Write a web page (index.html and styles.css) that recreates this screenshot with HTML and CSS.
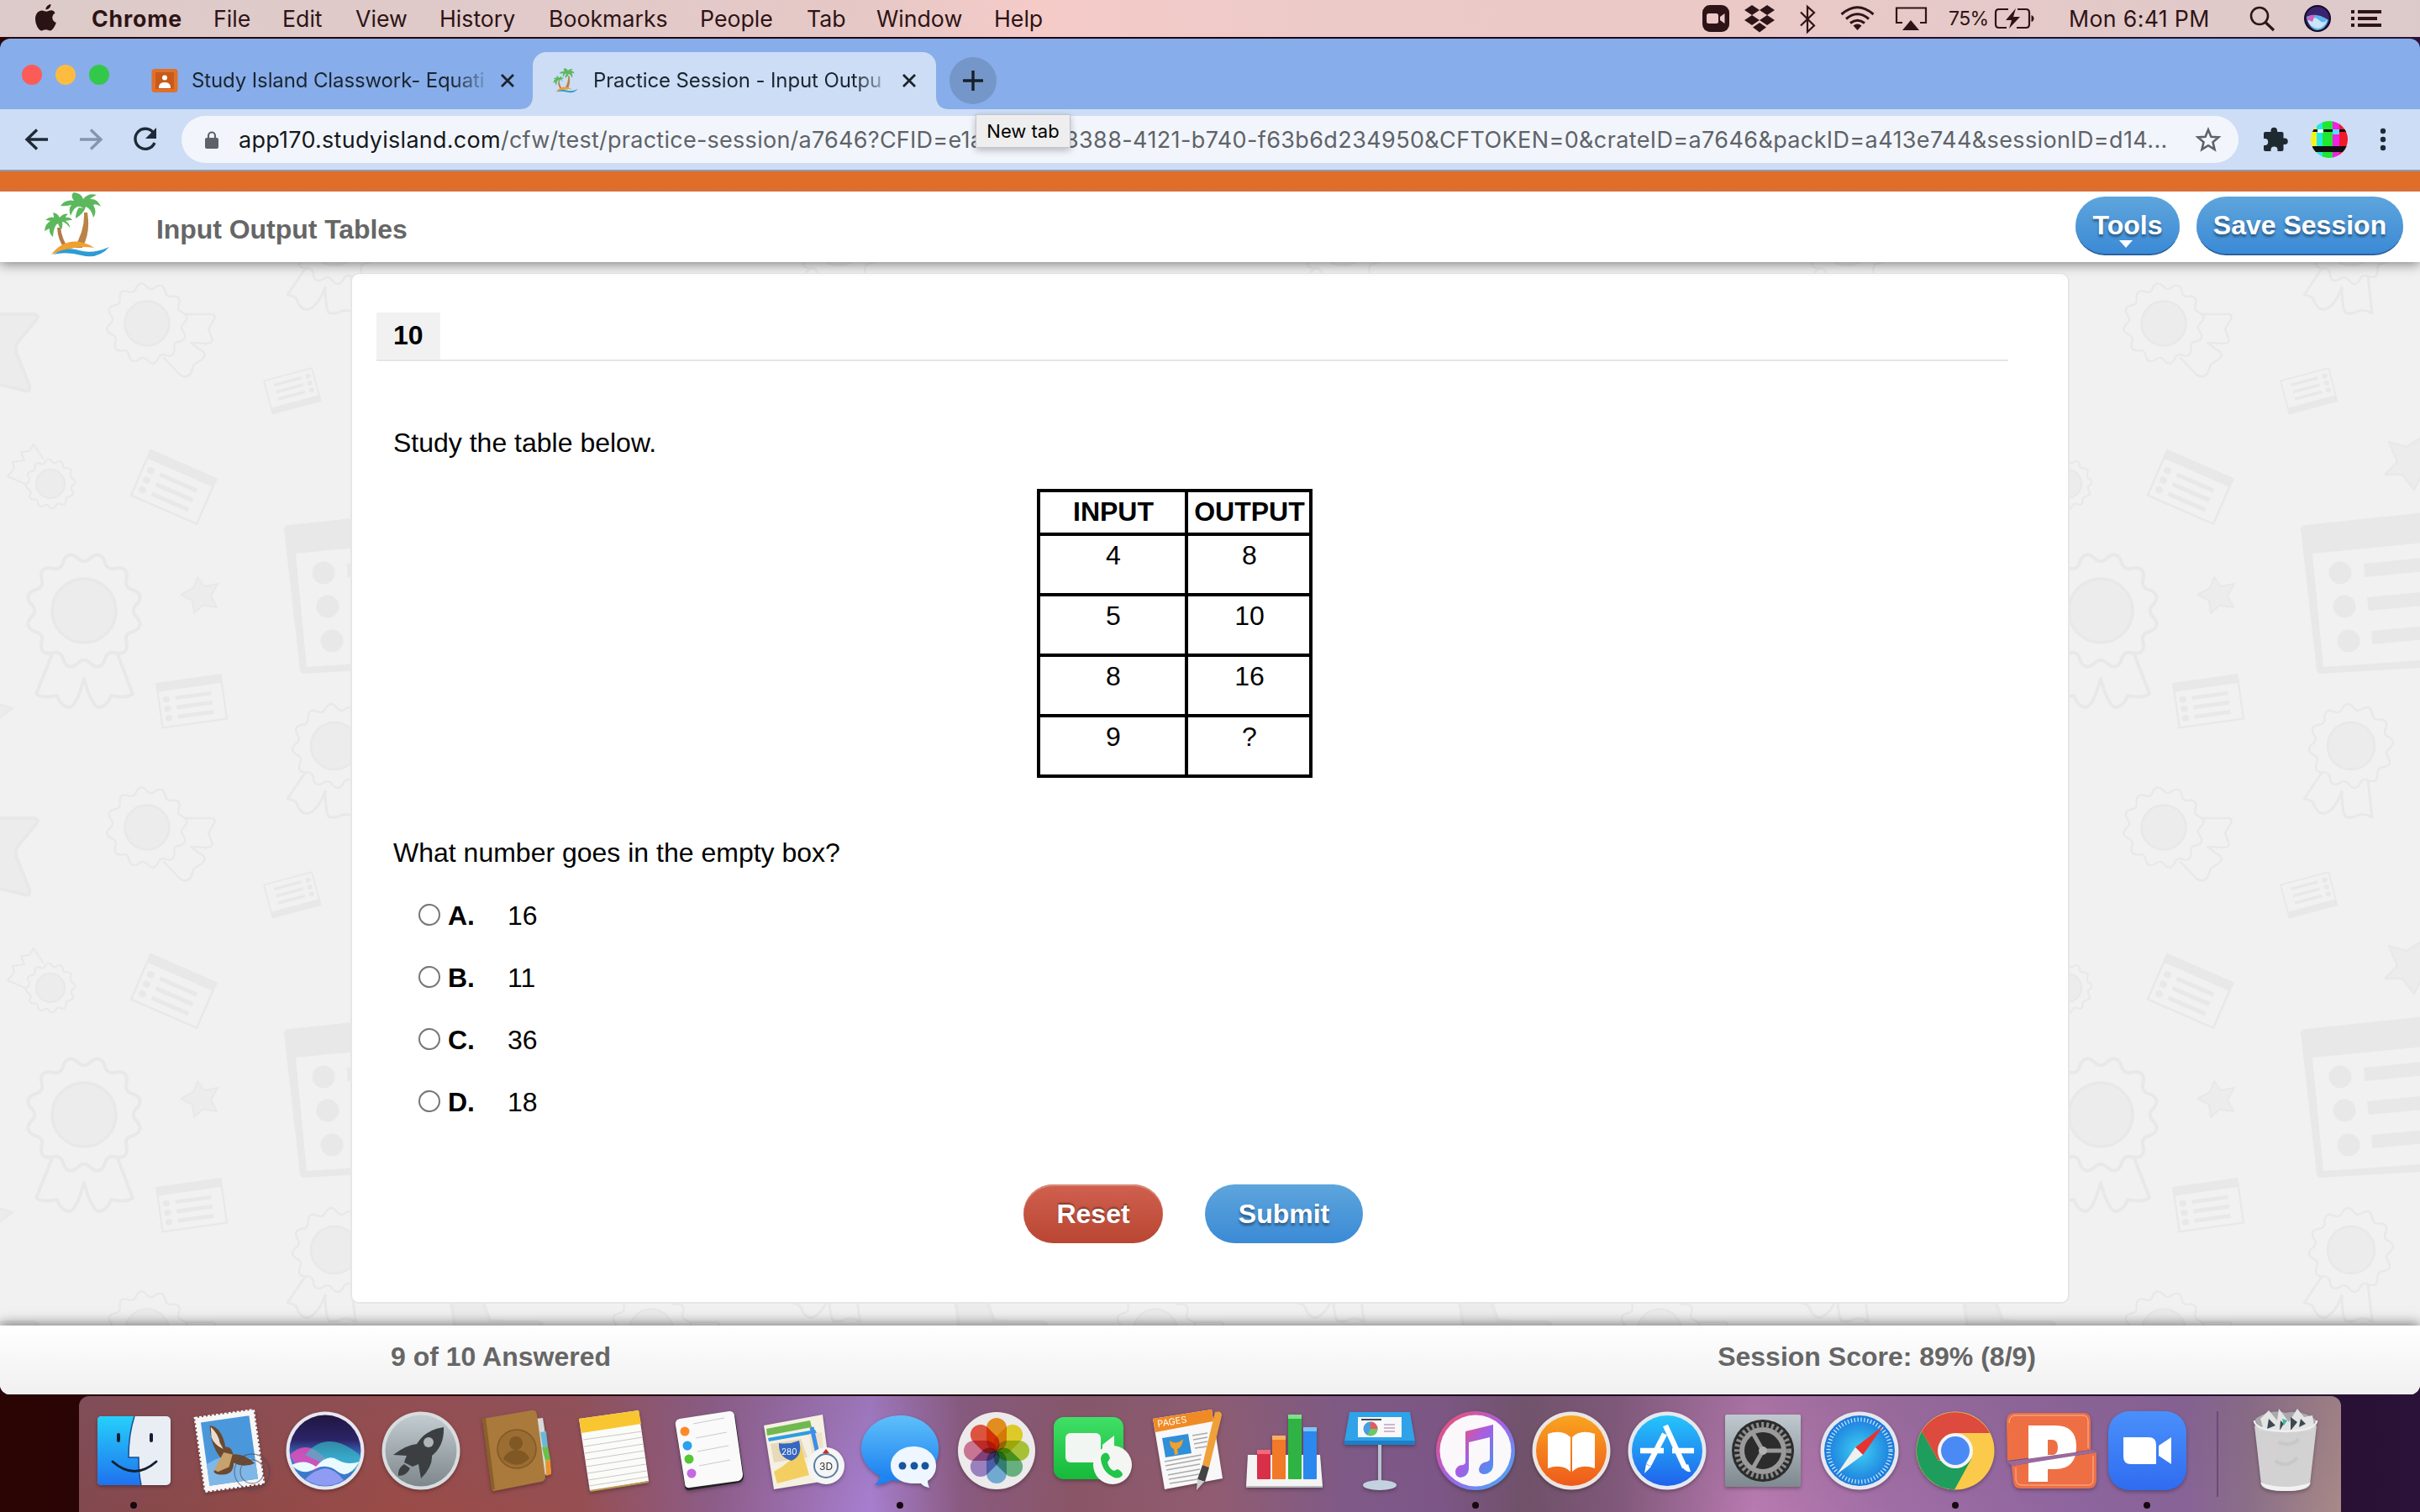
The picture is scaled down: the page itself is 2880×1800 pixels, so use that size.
FILE: index.html
```html
<!DOCTYPE html>
<html lang="en">
<head>
<meta charset="utf-8">
<title>Practice Session - Input Output Tables</title>
<link rel="stylesheet" href="styles.css">
</head>
<body>
<header class="menubar">
  <svg class="apple" viewBox="0 0 28 34"><path fill="#2a1315" d="M19.5 1c.3 3-2.600 6.500-6 6.500C13.100 4.500 16.200 1.300 19.500 1zM24.500 11.500c-4.800 3-3.900 9.500 1.300 11.500-1.500 4.500-4.500 9.500-7.300 9.500-1.900 0-2.700-1.200-5-1.200s-3.200 1.200-5 1.200C5 32.500 1 25 1 18.500 1 12 5 8.500 9 8.500c2.200 0 3.700 1.300 5.200 1.300 1.400 0 3.200-1.500 5.800-1.500 1.700 0 3.600 1.200 4.500 3.200z"/></svg>
  <nav class="menus">
    <b>Chrome</b><span>File</span><span>Edit</span><span>View</span><span>History</span><span>Bookmarks</span><span>People</span><span>Tab</span><span>Window</span><span>Help</span>
  </nav>
  <svg class="status" viewBox="2020 0 300 44">
    <g fill="#2e1416">
      <rect x="2026" y="6" width="32" height="32" rx="9"/><rect x="2031" y="16" width="14" height="12" rx="2.500" fill="#ecc9c8"/><path fill="#ecc9c8" d="M2047 20l5.500-4v12l-5.500-4z"/>
      <path d="M2085 6l9 6-9 6-9-6zM2103 6l9 6-9 6-9-6zM2085 18l9 6-9 6-9-6zM2103 18l9 6-9 6-9-6zM2094 27l8 5.500-8 6-8-6z"/>
      <path d="M2205.500 30.500q5-4 10 0l-5 5.500z"/>
      <path d="M2274 24l10 12h-20z"/>
    </g>
    <g fill="none" stroke="#2e1416" stroke-width="2.200">
      <path d="M2143 14.500l16 16-8 7.500V8l8 7-16 15.500"/>
      <path stroke-width="3" d="M2191.500 17q19-16.500 38 0M2197 22.500q13.500-11.500 27 0M2202 27.500q8.500-6.500 17 0"/>
      <path d="M2264 27h-7V9.500h35V27h-7"/>
    </g>
  </svg>
  <span class="pct">75%</span>
  <svg class="battery" viewBox="0 0 50 30"><g fill="none" stroke="#2e1416" stroke-width="2.200"><path d="M17 4H6q-4 0-4 4v14q0 4 4 4h9M28 4h10q4 0 4 4v14q0 4-4 4H27"/></g><path fill="#2e1416" d="M26 3L14 17h7l-3 10 13-14h-8zM44.500 11q3 1 3 4t-3 4z"/></svg>
  <span class="clock">Mon 6:41 PM</span>
  <svg class="tray" viewBox="2670 0 170 44">
    <circle cx="2689" cy="19" r="10" fill="none" stroke="#2e1416" stroke-width="2.600"/><path d="M2696.500 27l9.500 9" stroke="#2e1416" stroke-width="3.200"/>
    <circle cx="2758" cy="22" r="16" fill="#120a22"/><circle cx="2758" cy="22" r="14" fill="#3a2470"/><path d="M2745 20q12-6 26 4-4 12-13 12t-13-16z" fill="#5fb4e8"/><path d="M2746 24q8-6 14 0t10-2q-2 10-11 12-10-1-13-10z" fill="#c9e6fa"/><path d="M2745 23q4-6 10-5l-3 8z" fill="#d35fc0"/>
    <path fill="#2e1416" d="M2798 12h4v4h-4zM2806 12h28v4h-28zM2798 20h4v4h-4zM2806 20h23v4h-23zM2798 28h4v4h-4zM2806 28h28v4h-28z"/>
  </svg>
</header>

<div class="window">
  <div class="tabs">
    <div class="lights"><i class="red"></i><i class="amber"></i><i class="green"></i></div>
    <div class="tab tab-a">
      <svg class="fav" viewBox="0 0 33 28"><rect x=".5" y="0" width="31" height="28" rx="4" fill="#e0702a"/><rect x="5" y="4" width="22" height="20" fill="#c85a1a"/><circle cx="16" cy="10.500" r="3" fill="#fff"/><path d="M9 21q1-5 7-5t7 5v2H9z" fill="#fff"/></svg>
      <span class="tab-title">Study Island Classwork- Equati</span>
      <svg class="x" viewBox="0 0 20 20"><path d="M3 3l14 14M17 3L3 17" stroke="#1b2229" stroke-width="2.800"/></svg>
    </div>
    <div class="tab tab-b">
      <svg class="corner left" viewBox="0 0 16 16"><path d="M16 0v16H0Q16 16 16 0z" fill="#ccddf5"/></svg>
      <svg class="fav" viewBox="0 0 33 28"><use href="#palm" transform="scale(.38) translate(0,-2)"/></svg>
      <span class="tab-title">Practice Session - Input Outpu</span>
      <svg class="x" viewBox="0 0 20 20"><path d="M3 3l14 14M17 3L3 17" stroke="#1b2229" stroke-width="2.800"/></svg>
      <svg class="corner right" viewBox="0 0 16 16"><path d="M0 0v16h16Q0 16 0 0z" fill="#ccddf5"/></svg>
    </div>
    <div class="newtab"><svg viewBox="0 0 24 24"><path d="M12 0v24M0 12h24" stroke="#16202a" stroke-width="3.400"/></svg></div>
  </div>
  <div class="toolbar">
    <svg class="navs" viewBox="0 0 216 72">
      <g fill="none" stroke="#1f2a36" stroke-width="3.400"><path d="M57 36H33M44 24.500L32 36l12 11.500"/><path stroke="#8496ae" d="M95 36h24M108 24.500L120 36l-12 11.500"/><path d="M182.500 28A12 12 0 1 0 184 40"/></g><path fill="#1f2a36" d="M186 22v13h-13z"/>
    </svg>
    <div class="omnibox">
      <svg class="lock" viewBox="0 0 18 25"><rect x="1" y="10" width="16" height="13" rx="2" fill="#5f6368"/><path d="M5 11V7.500a4 4 0 0 1 8 0V11" fill="none" stroke="#5f6368" stroke-width="2.200"/></svg>
      <span class="url-a"><span class="host">app170.studyisland.com</span>/cfw/test/practice-session/a7646?CFID=e1a</span>
      <span class="url-b">3388-4121-b740-f63b6d234950&amp;CFTOKEN=0&amp;crateID=a7646&amp;packID=a413e744&amp;sessionID=d14...</span>
      <svg class="star" viewBox="0 0 30 28"><path d="M15 2.500l3.400 8.200 8.900.7-6.800 5.800 2.100 8.700L15 21.200l-7.600 4.700 2.100-8.700-6.800-5.800 8.900-.7z" fill="none" stroke="#5f6368" stroke-width="2.600"/></svg>
    </div>
    <svg class="ext" viewBox="2680 0 200 72">
      <path fill="#1f2a30" d="M2696 27h6.500v-1.500a3.800 3.800 0 0 1 7.600 0V27h5.400q2 0 2 2v5.500h1.500a3.800 3.800 0 0 1 0 7.600h-1.500V48q0 2-2 2h-5v-1.500a4 4 0 0 0-8 0V50H2696q-2 0-2-2v-5h1.200a4 4 0 0 0 0-8h-1.200v-6q0-2 2-2z"/>
      <clipPath id="av"><circle cx="2772" cy="36" r="22"/></clipPath>
      <g clip-path="url(#av)"><path fill="#f3f31c" d="M2750 14h8v44h-8z"/><path fill="#25e6e6" d="M2757 14h9v44h-9z"/><path fill="#20e82e" d="M2764 14h13v44h-13z"/><path fill="#f020e8" d="M2776 14h9v44h-9z"/><path fill="#f01a28" d="M2784 14h12v44h-12z"/><path fill="#101010" d="M2750 24h44v3h-44zM2752 44h42v7h-42z"/><path fill="#fff" d="M2758 24h7v4h-7z"/><path fill="#5fd8ff" d="M2776 24h8v6h-8z"/></g>
      <g fill="#1f2a36"><circle cx="2836" cy="26" r="3.200"/><circle cx="2836" cy="36" r="3.200"/><circle cx="2836" cy="46" r="3.200"/></g>
    </svg>
    <div class="tooltip">New tab</div>
  </div>

  <div class="page">
    <div class="orange"></div>
    <div class="apphead">
      <svg class="palm" viewBox="0 0 80 78">
        <g id="palm">
          <path fill="#b98445" d="M48 24q1 22-12 42h10q10-18 6-42z"/><path fill="#b57a4b" d="M16 42q1 16 9 25h5q-8-10-10-25z"/>
          <path fill="#5cb85c" d="M47 19q-9-7-15 9-3-9 1-13-9 2-13 1 6-8 16-6Q31 3 36 0q9 1 11 8 6-8 16-5-6 3-8 5 9-1 13 9-6-4-9-2 5 8 0 15-2-10-9-13-2 8-12 14 0-8 4-13z"/>
          <path fill="#5cb85c" d="M17 37q-5 2-6 16-5-4-4-10-4 2-6 3 1-9 7-12-4-1-6-1 5-5 10-3 0-3-1-6 6 1 8 6 5-6 10-4-3 2-3 4 5-1 8 3-5 0-8 1 5 3 5 8-4-6-9-7 1 6-1 9-3-3-4-7z"/>
          <path fill="#f0a030" d="M9 74q16-20 38-14 8 2 13 6-20-3-33 3-10 1-18 5z"/>
          <path fill="#2f9bd3" d="M11 74q16-10 31-5 16 5 36-4-13 15-33 10-18-5-34-1z"/>
        </g>
      </svg>
      <h1>Input Output Tables</h1>
      <div class="btn blue tools"><span>Tools</span><i class="caret"></i></div>
      <div class="btn blue save"><span>Save Session</span></div>
    </div>
    <main class="stage">
      <svg class="wall" viewBox="0 312 2880 1266">
        <defs>
          <path id="ros" d="M63.500 8.400Q71.500 19.200 59.100 24.500Q46.800 27 50.800 39Q52.300 52.300 39 50.800Q27 46.800 24.500 59.100Q19.200 71.500 8.400 63.500Q0 54-8.400 63.500Q-19.200 71.500-24.500 59.100Q-27 46.800-39 50.800Q-52.300 52.300-50.800 39Q-46.800 27-59.100 24.500Q-71.500 19.200-63.500 8.400Q-54 0-63.500-8.400Q-71.500-19.200-59.100-24.500Q-46.800-27-50.800-39Q-52.300-52.300-39-50.800Q-27-46.800-24.500-59.100Q-19.200-71.500-8.400-63.500Q0-54 8.400-63.500Q19.200-71.500 24.500-59.100Q27-46.800 39-50.800Q52.300-52.300 50.800-39Q46.800-27 59.100-24.500Q71.500-19.200 63.500-8.400Q54 0 63.500 8.400z"/>
          <g id="doc"><rect x="-41" y="-27" width="82" height="56" stroke-width="2.500"/><path stroke="none" fill="#e8e8e8" d="M-42-28h84v11h-84z"/><g stroke-width="5"><path d="M-20-6h46M-20 6h46M-20 18h46"/><path stroke-width="8" stroke-linecap="round" d="M-32-6h1M-32 6h1M-32 18h1"/></g></g>
          <g id="bigrib" stroke-width="4"><path d="M62 779L43 826q8 6 25 2 4 13 15 14 8-2 17-34 9 32 17 34 11-1 15-14 17 4 26-2l-18-47"/></g>
          <g id="ros10"><path stroke-width="3" d="M363 920l-21 31q8 1 11 5 5 15 15 12 12-6 19-26 0 22 4 30 8 3 16-2 8-2 16 3l-5-45"/><use href="#ros" fill="#f1f1f1" transform="translate(398 888) rotate(10) scale(.73)"/><circle cx="398" cy="888" r="28" fill="#ececec" stroke-width="2.500"/></g>
          <pattern id="tile" patternUnits="userSpaceOnUse" x="0" y="300" width="600" height="600" viewBox="0 300 600 600">
            <g fill="none" stroke="#e8e8e8" stroke-width="3.200" stroke-linejoin="round">
              <path d="M217 374h37q4 3-1 9l-5 9 5 13q-1 4-8 4l-18-1 15 11q4 4-2 9l-9 6-4 11q-6 6-13 1l-20-21" stroke-width="2.500"/>
              <use href="#ros" fill="#f1f1f1" transform="translate(175 385) rotate(6) scale(.7)"/><circle cx="175" cy="385" r="26.500" fill="#ececec" stroke-width="2.500"/>
              <use href="#doc" transform="translate(348 466) rotate(165) scale(.72)"/>
              <path d="M-4 374h44q8 1 3 7L20 409q-3 6 0 12l15 38q2 8-6 6L-4 457z" fill="#ececec" stroke-width="4"/>
              <path d="M32 577L9 567l8-9-2-8 14-2-4-10 10-1 5-8 12 18" stroke-width="2.200"/>
              <use href="#ros" fill="#f1f1f1" transform="translate(60 576) rotate(10) scale(.43)" stroke-width="5"/><circle cx="60" cy="576" r="17" fill="#ececec" stroke-width="2.200"/>
              <use href="#doc" transform="translate(207 579) rotate(23.500) scale(1.040)"/>
              <use href="#bigrib"/><use href="#ros" fill="#f1f1f1" transform="translate(100 727)" stroke-width="4"/><circle cx="100" cy="727" r="38" fill="#ececec" stroke-width="3.500"/>
              <path d="M235 687l8 11 16-3-8 15 7 13-17-2-10 9-2-15-14-7 15-8z" fill="#ececec" stroke-width="2"/>
              <use href="#doc" transform="translate(228 834) rotate(-8) scale(.94)"/>
              <path d="M-3 838l18 5-18 14z" fill="#ececec" stroke-width="2"/>
              <path fill="#e8e8e8" stroke="none" fill-rule="evenodd" d="M338 630q0-4 5-5L600 598v190L362 802q-4 0-5-4zM352 659l13 135L600 778V635z"/>
              <g fill="#e8e8e8" stroke="none"><circle cx="385" cy="682" r="13.500"/><circle cx="390" cy="722" r="13.500"/><circle cx="395" cy="763" r="13.500"/><path d="M413 671l180-18v17l-179 17zM417 711l180-17v17l-178 16zM422 751l175-16v16l-174 16z"/></g>
              <use href="#ros10"/><use href="#ros10" transform="translate(0 -600)"/>
              <path d="M443 526l21 6 22-14v22l18 12-20 10-11 21-14-18-21 0 15-15z" fill="#ececec" stroke-width="2.200"/>
              <path d="M604 457l-19-3-32 24-8-44-41-18 39-24-6-44 24-4q8-6 14 6l8 22 21 2z" fill="#ececec" stroke-width="4"/>
            </g>
          </pattern>
        </defs>
        <rect x="0" y="312" width="2880" height="1266" fill="url(#tile)"/>
      </svg>
      <section class="card">
        <div class="qhead"><span class="qnum">10</span></div>
        <p class="q1">Study the table below.</p>
        <table class="io">
          <tr><th>INPUT</th><th>OUTPUT</th></tr>
          <tr><td>4</td><td>8</td></tr>
          <tr><td>5</td><td>10</td></tr>
          <tr><td>8</td><td>16</td></tr>
          <tr><td>9</td><td>?</td></tr>
        </table>
        <p class="q2">What number goes in the empty box?</p>
        <div class="choices">
          <label><i></i><b>A.</b>16</label>
          <label><i></i><b>B.</b>11</label>
          <label><i></i><b>C.</b>36</label>
          <label><i></i><b>D.</b>18</label>
        </div>
        <div class="actions"><div class="btn red reset">Reset</div><div class="btn blue submit">Submit</div></div>
      </section>
    </main>
    <footer class="foot"><span>9 of 10 Answered</span><span>Session Score: 89% (8/9)</span></footer>
  </div>
</div>

<div class="desk">
<div class="dock">
  <div class="app on"><svg viewBox="0 0 100 100"><defs><linearGradient id="gf" x2="0" y2="1"><stop stop-color="#25d0fb"/><stop offset="1" stop-color="#1f72ee"/></linearGradient></defs><rect x="7" y="9" width="87" height="82" rx="5" fill="#e9edf4"/><path d="M51 9H12q-5 0-5 5v72q0 5 5 5h47q-3-14-3-33H44q0-28 7-49z" fill="url(#gf)"/><path d="M51 9q-7 21-7 49h12q0 19 3 33" fill="none" stroke="#1c4d90" stroke-width="1.500"/><path d="M32 31v7M71 31v7" stroke="#142030" stroke-width="4" stroke-linecap="round"/><path d="M25 63q26 23 52 0" fill="none" stroke="#142030" stroke-width="3" stroke-linecap="round"/></svg></div>
  <div class="app"><svg viewBox="0 0 100 100"><g transform="rotate(-8 50 50)"><rect x="15" y="6" width="70" height="88" fill="#f7f7f7" stroke="#f7f7f7" stroke-width="3" stroke-dasharray="3 2"/><rect x="21" y="12" width="58" height="76" fill="#4b97dc"/><path d="M21 62q30-14 58 4v22H21z" fill="#7fb8e8"/><path d="M31 17q14 4 15 28 7 0 8 10 12 0 24 14-14 4-25-4-2 14-15 12-8 0-10-5l14-10Q28 44 31 17z" fill="#6b4a30"/><path d="M32 19q8 10 8 20l3 8q-10-6-12-16z" fill="#e8ddd0"/><path d="M43 51l10 4-6 14-14 4-4-3z" fill="#c8a26c"/></g><g fill="none" stroke="#4b4a60" stroke-width="1.300" opacity=".6"><circle cx="77" cy="75" r="21"/><circle cx="77" cy="75" r="14"/></g></svg></div>
  <div class="app"><svg viewBox="0 0 100 100"><defs><linearGradient id="gs" x2="0" y2="1"><stop stop-color="#201640"/><stop offset=".35" stop-color="#2c2468"/><stop offset=".6" stop-color="#3d7ad0"/><stop offset="1" stop-color="#3a78c8"/></linearGradient></defs><circle cx="50" cy="50" r="46.500" fill="#e9e6ef"/><circle cx="50" cy="50" r="42.500" fill="url(#gs)"/><path d="M8 55q20-20 42 4-10 24-34 10z" fill="#e24fb8" opacity=".85"/><path d="M26 55q26-32 65 0 2 10-8 20-20-2-57-20z" fill="#35c8c8" opacity=".6"/><path d="M10 67q16-8 29 2 14-16 26-8 12 7 26 2-14 22-26 12-12-10-26-4-16 10-29-4z" fill="#e9fbff"/><path d="M26 84q12-12 24-13 12 1 22 14-22 14-46-1z" fill="#8f9cf4"/></svg></div>
  <div class="app"><svg viewBox="0 0 100 100"><defs><linearGradient id="gl" x2="0" y2="1"><stop stop-color="#c3ccd0"/><stop offset="1" stop-color="#7d878c"/></linearGradient></defs><circle cx="50" cy="50" r="46.500" fill="#d9dcde"/><circle cx="50" cy="50" r="42.500" fill="url(#gl)"/><path d="M77 22q-22 3-32 20-12 1-28 13l16 1q-2 4-3 8 4 2 10 5l7-3 3 17q14-14 13-27Q78 44 77 22z" fill="#3b3f42"/><circle cx="59" cy="40" r="6" fill="#aeb6ba"/><path d="M30 66q-8 5-7 14 10 0 14-9z" fill="#3b3f42"/></svg></div>
  <div class="app"><svg viewBox="0 0 100 100"><path d="M72 12l9-1 10 65-8 3z" fill="#d8d8d8"/><path d="M78 28l7-1 2 18-6 1z" fill="#69b8d8"/><path d="M80 46l7-1 3 16-6 1z" fill="#6cc04a"/><path d="M84 62l6-1 1 17-6 2z" fill="#e8942a"/><path d="M9 12l58-10q6-1 7 5l10 74q0 5-5 6L23 98q-3 0-3-4z" fill="#a97a3c"/><path d="M9 12l4-1 11 85-4 1z" fill="#8a6028"/><circle cx="50" cy="48" r="23" fill="#9b6d32" stroke="#7f5824" stroke-width="1.500"/><circle cx="49" cy="41" r="8" fill="#7f5824"/><path d="M34 60q4-10 15-11 11 0 16 10-14 15-31 1z" fill="#7f5824"/></svg></div>
  <div class="app"><svg viewBox="0 0 100 100"><path d="M10 12L81 2l12 84-70 12z" fill="#fbfbf8"/><path d="M10 12L81 2l3 16-71 11z" fill="#f8c630"/><path d="M15 37l70-10M16 45l70-11M17 53l70-11M18 61l70-11M19 69l70-11M20 77l70-11M21 85l70-11M22 92l70-11" stroke="#c9c9c9" stroke-width="1.200"/><path d="M23 97l70-11v2L24 99z" fill="#b99a50"/></svg></div>
  <div class="app"><svg viewBox="0 0 100 100"><path d="M16 14L76 5q5 0 6 5l10 70q0 6-5 8L28 97q-6 1-6-5L11 22q-1-7 5-8z" fill="#222"/><path d="M16 12L75 3q5 0 6 5l10 70q0 6-5 8L28 94q-6 1-6-5L11 20q-1-7 5-8z" fill="#fafafa"/><circle cx="22" cy="27" r="5.500" fill="#ff8a2a"/><circle cx="25" cy="44" r="5.500" fill="#2aa0ee"/><circle cx="27" cy="60" r="5.500" fill="#54c832"/><circle cx="30" cy="77" r="5.500" fill="#c46ae0"/><path d="M32 18l37-7M35 35l37-7M37 51l37-7M39 68l37-7" stroke="#ccc" stroke-width="1.200"/></svg></div>
  <div class="app"><svg viewBox="0 0 100 100"><path d="M2 20l70-13 10 78-68 11z" fill="#f4f0e2"/><path d="M5 24l52-10 2 8-53 10z" fill="#6fb950"/><path d="M7 35l56-10 2 4-57 10z" fill="#2f9ce0"/><path d="M10 42l36-6 8 22-40 6z" fill="#e8d9b8"/><path d="M14 75q22-12 32-30l10 34-38 10z" fill="#f2cf60"/><path d="M56 30l15-2 4 40-14-4z" fill="#efe2cc"/><path d="M59 22l8 36" stroke="#3c8ee8" stroke-width="5"/><path d="M20 41q12 2 24-3 5 18-9 24-16-4-15-21z" fill="#3668c0"/><text x="23" y="55" font-size="10" fill="#fff" class="sans">280</text><circle cx="76" cy="68" r="22" fill="#f5f5f5"/><circle cx="76" cy="68" r="14" fill="none" stroke="#5a7f9a" stroke-width="2"/><path d="M76 48l4 5h-8z" fill="#d22"/><text x="68" y="72.500" font-size="12" fill="#333" class="sans">3D</text></svg></div>
  <div class="app on"><svg viewBox="0 0 100 100"><defs><linearGradient id="gm" x2="0" y2="1"><stop stop-color="#5fc0fa"/><stop offset="1" stop-color="#1a7ff0"/></linearGradient></defs><path d="M50 8C75 8 96 25 96 48S78 86 50 86q-6 0-10-1-7 5-20 6 7-6 6-13Q4 66 4 47 4 24 50 8z" fill="url(#gm)"/><ellipse cx="50" cy="47" rx="46" ry="39" fill="url(#gm)"/><path d="M66 45c16 0 27 10 27 23 0 8-4 14-10 18q0 4 2 8-7-1-10-5h-9c-16 0-27-9-27-21s11-23 27-23z" fill="#eef6ff"/><g fill="#17559c"><circle cx="53" cy="68" r="4.500"/><circle cx="67" cy="68" r="4.500"/><circle cx="80" cy="68" r="4.500"/></g></svg></div>
  <div class="app"><svg viewBox="0 0 100 100"><circle cx="50" cy="50" r="46" fill="#eceaea"/><g class="petals"><rect x="38" y="11" width="24" height="39" rx="12" fill="#f59a23"/><rect x="38" y="11" width="24" height="39" rx="12" fill="#efdb2a" transform="rotate(45 50 50)"/><rect x="38" y="11" width="24" height="39" rx="12" fill="#b5d33c" transform="rotate(90 50 50)"/><rect x="38" y="11" width="24" height="39" rx="12" fill="#6fbf8a" transform="rotate(135 50 50)"/><rect x="38" y="11" width="24" height="39" rx="12" fill="#7ab8e4" transform="rotate(180 50 50)"/><rect x="38" y="11" width="24" height="39" rx="12" fill="#a88ccf" transform="rotate(225 50 50)"/><rect x="38" y="11" width="24" height="39" rx="12" fill="#d77f9f" transform="rotate(270 50 50)"/><rect x="38" y="11" width="24" height="39" rx="12" fill="#ee5a44" transform="rotate(315 50 50)"/></g></svg></div>
  <div class="app"><svg viewBox="0 0 100 100"><defs><linearGradient id="gt" x2="0" y2="1"><stop stop-color="#3fe066"/><stop offset="1" stop-color="#16b93a"/></linearGradient></defs><rect x="4" y="10" width="83" height="74" rx="12" fill="url(#gt)"/><rect x="18" y="29" width="42" height="35" rx="6" fill="#f2f6f2"/><path d="M62 43l14-11v32L62 52z" fill="#f2f6f2"/><circle cx="74" cy="67" r="23" fill="#f4f6f4"/><path d="M64 53q5-2 7 6l-3 5q2 8 8 10l4-2q6 3 6 7-4 5-10 3-14-6-16-22 0-5 4-7z" fill="#22c44a"/></svg></div>
  <div class="app"><svg viewBox="0 0 100 100"><path d="M8 12L78 1l13 82-69 13z" fill="#f8f8f8"/><path d="M8 12L78 1l2 14-69 13z" fill="#f08a24"/><text x="0" y="0" font-size="11" fill="#fff" class="sans" transform="translate(14 22) rotate(-9)">PAGES</text><path d="M19 35l31-5 4 23-31 5z" fill="#2f8fd8"/><path d="M28 38q8 6 16-2-1 10-7 12l1 6-4 1-1-7q-5-2-5-10z" fill="#f5a02a"/><path d="M55 32l18-3M56 37l17-3M57 42l16-3M58 47l14-2M22 63l44-8M23 68l42-8M24 73l40-7M26 79l38-7M27 84l36-6M28 89l33-5" stroke="#aaa" stroke-width="1.500"/><path d="M82 4q8-2 8 4L75 70l-8-3z" fill="#f0a038"/><path d="M67 67l8 3-5 17-9-3z" fill="#444"/><path d="M61 84l8 3-9 10z" fill="#ccc"/></svg></div>
  <div class="app"><svg viewBox="0 0 100 100"><path d="M7 55h86l3 37H5z" fill="#f4f4f4"/><path d="M5 92h91v2H5z" fill="#bbb"/><rect x="18" y="49" width="16" height="35" rx="1" fill="#d83048"/><rect x="36" y="32" width="16" height="52" rx="1" fill="#f07a28"/><rect x="55" y="7" width="16" height="77" rx="1" fill="#2fb344"/><rect x="73" y="22" width="16" height="62" rx="1" fill="#2a88ee"/><path d="M18 49h16v5H18z" fill="#f06a7a"/><path d="M36 32h16v5H36z" fill="#f8b060"/><path d="M55 7h16v5H55z" fill="#7fe088"/><path d="M73 22h16v5H73z" fill="#80c4f8"/></svg></div>
  <div class="app"><svg viewBox="0 0 100 100"><path d="M14 4h72l6 35H8z" fill="#2fa2e8"/><path d="M8 38h84v5H8z" fill="#1c7fc8"/><path d="M24 10h52v24H24z" fill="#f8f8f8"/><path d="M28 13h24" stroke="#445" stroke-width="2"/><circle cx="39" cy="24" r="8.500" fill="#4a9ee0"/><path d="M39 24v-8.500a8.500 8.500 0 0 1 8.500 8.500z" fill="#e85a5a"/><path d="M39 24h8.500a8.500 8.500 0 0 1-12 7.500z" fill="#6cc860"/><path d="M55 19h13M55 23h13M55 27h13" stroke="#c0a0c0" stroke-width="1.500"/><path d="M48 43h4v46h-4z" fill="#b9c3cf"/><ellipse cx="50" cy="91" rx="20" ry="6" fill="#c3d2de"/></svg></div>
  <div class="app on"><svg viewBox="0 0 100 100"><defs><linearGradient id="gi" y2="1"><stop stop-color="#f8505e"/><stop offset=".5" stop-color="#a560e8"/><stop offset="1" stop-color="#32b8f6"/></linearGradient><linearGradient id="gn" x2="1" y2="1"><stop stop-color="#f84f6e"/><stop offset=".5" stop-color="#a060e8"/><stop offset="1" stop-color="#3a9cf0"/></linearGradient></defs><circle cx="50" cy="50" r="47" fill="url(#gi)"/><circle cx="50" cy="50" r="42.500" fill="#fbf8fc"/><path d="M38 27l33-8v48q0 9-10 11-7 0-7-6 1-8 10-9 3-1 3-3V34l-25 6v32q-1 9-10 10-6-1-6-7 1-8 9-8 3-1 3-3z" fill="url(#gn)"/></svg></div>
  <div class="app"><svg viewBox="0 0 100 100"><defs><linearGradient id="gb" x2="0" y2="1"><stop stop-color="#f9a41f"/><stop offset="1" stop-color="#ee5a1c"/></linearGradient></defs><circle cx="50" cy="50" r="46.500" fill="#ece6e2"/><circle cx="50" cy="50" r="42" fill="url(#gb)"/><path d="M49 34q-10-10-27-4v41q17-6 27 4zM51 34q10-10 27-4v41q-17-6-27 4z" fill="#fff"/></svg></div>
  <div class="app"><svg viewBox="0 0 100 100"><defs><linearGradient id="ga" x2="0" y2="1"><stop stop-color="#25c5fa"/><stop offset="1" stop-color="#1f62ec"/></linearGradient></defs><circle cx="50" cy="50" r="46.500" fill="#e6e8f0"/><circle cx="50" cy="50" r="42" fill="url(#ga)"/><g stroke="#fff" fill="none" stroke-width="6.500"><path d="M48 20l23 50M47 30L28 67"/><path d="M18 50h28M56 50h26"/></g><path d="M25 66l6 3-8 8zM68 69l7-3 3 9q-6 1-10-6z" fill="#fff"/></svg></div>
  <div class="app"><svg viewBox="0 0 100 100"><defs><linearGradient id="gp" x2="0" y2="1"><stop stop-color="#bfc9cf"/><stop offset="1" stop-color="#7f8a90"/></linearGradient></defs><rect x="5" y="7" width="90" height="86" rx="2" fill="url(#gp)"/><circle cx="50" cy="50" r="37" fill="#2c2c2c"/><circle cx="50" cy="50" r="31" fill="none" stroke="#8d8d8d" stroke-width="6" stroke-dasharray="3 3"/><circle cx="50" cy="50" r="25" fill="none" stroke="#9a9a9a" stroke-width="6"/><path d="M50 50h24M50 50L38 29M50 50L38 71" stroke="#9a9a9a" stroke-width="5"/><circle cx="50" cy="50" r="5" fill="#b0b0b0"/></svg></div>
  <div class="app"><svg viewBox="0 0 100 100"><defs><radialGradient id="gz"><stop stop-color="#3fd0f4"/><stop offset="1" stop-color="#1a78dc"/></radialGradient></defs><circle cx="50" cy="50" r="46.500" fill="#e6e8ee"/><circle cx="50" cy="50" r="42" fill="url(#gz)"/><circle cx="50" cy="50" r="37" fill="none" stroke="#d5ecfa" stroke-width="5" stroke-dasharray="1.200 2.700"/><path d="M78 21L45 46l9 9z" fill="#e8322e"/><path d="M23 78l22-32 9 9z" fill="#f0f0f0"/></svg></div>
  <div class="app on"><svg viewBox="0 0 100 100"><circle cx="50" cy="50" r="46.500" fill="#fbca4a"/><path d="M30 62L10 27A46.500 46.500 0 0 0 49 96.500L69 60z" fill="#1f9d5c"/><path d="M50 50L30 62 10 27A46.500 46.500 0 0 1 91 29H50z" fill="#dc4b3e"/><circle cx="50" cy="50" r="21" fill="#f4f4f4"/><circle cx="50" cy="50" r="17" fill="#4a8af4"/></svg></div>
  <div class="app"><svg viewBox="-3 0 100 100" class="pp"><g transform="translate(-5)"><path d="M-1 16Q-1 5 9 5h81q9 0 9 9v35L0 62z" fill="#ee6f44"/><path d="M5 68l101-16v33q0 10-10 10H16q-9 0-9-9z" fill="#ee6f44"/><path d="M2 17q0-9 8-9h79q7 0 7 7v32" fill="none" stroke="#f7b8a0"/><path d="M10 70v13q0 8 7 8h79q6 0 6-7V56" fill="none" stroke="#f7b8a0"/><path d="M25 20h32q25 0 25 25 0 27-25 27h-9v15H25zM48 37v18h5q7 0 7-9t-7-9z" fill="#fff" fill-rule="evenodd"/><path d="M0 63l101-14 5 3L5 68z" fill="#9a6a9c"/></g></svg></div>
  <div class="app on"><svg viewBox="0 0 100 100"><defs><linearGradient id="gv" x2="0" y2="1"><stop stop-color="#4a90fb"/><stop offset="1" stop-color="#2f6cf0"/></linearGradient></defs><rect x="4" y="3" width="93" height="94" rx="25" fill="url(#gv)"/><path d="M22 34h30q9 0 9 9v23H31q-9 0-9-9zM64 44l15-10v32L64 56z" fill="#fff"/></svg></div>
  <div class="sep"></div>
  <div class="app trash"><svg viewBox="0 0 100 100"><path d="M14 12q18-12 36-7 20-4 36 8l-4 14H18z" fill="#a9a9ad"/><path d="M20 12l10-10 10 12 2-14 12 16L64 0l8 10 10-2 2 12-10 6H24z" fill="#e4e4e4"/><path d="M30 12l8 8-10 4zM56 10l8 6-8 10zM44 14l4 4-5 8zM68 12l6 6-8 4z" fill="#3b4a50"/><path d="M46 12l6 2-4 6z" fill="#3bb8a0"/><path d="M13 20q37 12 74 0l-8 70q-2 8-29 8t-29-8z" fill="#d8d8d8" opacity=".95"/><path d="M13 14q0 12 37 13 37-1 37-13" fill="none" stroke="#efefef" stroke-width="2.500"/><path d="M20 88q30 10 60 0-4 10-30 10t-30-10z" fill="#f2f2f2"/><path d="M42 40q14 6 24-4M38 62q14 10 26-4" stroke="#c8c8c8" stroke-width="4" fill="none"/></svg></div>
</div>
</div>
</body>
</html>
```
FILE: styles.css
```css
* { box-sizing: border-box; }
body { margin: 0; width: 2880px; height: 1800px; overflow: hidden; display: flex; flex-direction: column; background: linear-gradient(90deg, #2b0504, #1c0412 50%, #2a1238); font-family: Inter, "Liberation Sans", sans-serif; color: #000; }
svg { display: block; overflow: visible; flex: none; }
p, h1 { margin: 0; }
i { font-style: normal; }
.sans { font-family: Inter, sans-serif; }

/* macOS menu bar */
.menubar { height: 44px; flex: none; display: flex; align-items: center; background: linear-gradient(90deg, #dccbca, #e2cac9 25%, #e6c8c6 36%, #f5cbc8 43%, #eccac8 55%, #ebc9c7 70%, #dccaca 100%); color: #2e1416; font-size: 26.700px; white-space: nowrap; line-height: 44px; }
.apple { width: 28px; height: 34px; margin: -2px 0 0 41px; }
.menus { display: grid; grid-template-columns: 145px 82px 87px 100px 130px 180px 127px 83px 140px 837px; margin-left: 40px; width: 1911px; }
.menus b { letter-spacing: .8px; }
.status { width: 300px; height: 44px; }
.pct { width: 54px; font-size: 23px; margin-left: -1px; letter-spacing: -.6px; }
.battery { width: 50px; height: 30px; }
.clock { margin-left: 39px; width: 208px; letter-spacing: .35px; }
.tray { width: 170px; height: 44px; }

/* Browser window */
.window { margin-top: 2px; height: 1614px; flex: none; border-radius: 12px; overflow: hidden; display: flex; flex-direction: column; background: #87adea; }
.tabs { height: 84px; flex: none; display: flex; align-items: flex-end; font-size: 24px; color: #1b2530; }
.lights { width: 180px; height: 84px; padding: 31px 0 0 26px; display: flex; gap: 16px; }
.lights i { width: 24px; height: 24px; border-radius: 50%; }
.lights .red { background: #fc5b57; }
.lights .amber { background: #fdbc40; }
.lights .green { background: #34c84a; }
.tab { height: 68px; display: flex; align-items: center; }
.tab-a { width: 454px; }
.tab-b { width: 480px; background: #ccddf5; border-radius: 16px 16px 0 0; padding-left: 24px; position: relative; }
.fav { width: 33px; height: 28px; }
.tab-title { width: 352px; margin-left: 15px; letter-spacing: -.12px; white-space: nowrap; line-height: 40px; -webkit-mask-image: linear-gradient(90deg, #000 88%, rgba(0,0,0,.15)); mask-image: linear-gradient(90deg, #000 88%, rgba(0,0,0,.15)); }
.x { width: 20px; height: 20px; margin-left: 14px; }
.corner { position: absolute; bottom: 0; width: 16px; height: 16px; }
.left { left: -16px; }
.right { right: -16px; }
.newtab { width: 56px; height: 56px; border-radius: 50%; background: #7596c8; margin: 0 0 6px 16px; display: flex; align-items: center; justify-content: center; }
.newtab svg { width: 24px; height: 24px; }
.toolbar { height: 74px; flex: none; background: #ccddf5; border-bottom: 2px solid #8c9bb0; display: flex; align-items: center; position: relative; }
.navs { width: 216px; height: 72px; }
.omnibox { width: 2448px; height: 56px; border-radius: 28px; background: #f2f6fc; display: flex; align-items: center; padding-left: 27px; font-size: 27px; color: #5f6368; white-space: nowrap; }
.lock { width: 18px; height: 25px; margin-right: 23px; }
.url-a { width: 983px; letter-spacing: .26px; }
.url-b { width: 1346px; letter-spacing: .38px; }
.host { color: #16181c; }
.star { width: 30px; height: 28px; }
.ext { width: 200px; height: 72px; margin-left: 16px; }
.tooltip { position: absolute; left: 1161px; top: 6px; width: 113px; height: 40px; background: #eeeeee; border: 1px solid #c4c4cc; box-shadow: 0 3px 8px rgba(0,0,0,.25); font-size: 22px; line-height: 38px; text-align: center; z-index: 2; }

/* Practice session page */
.page { flex: 1; display: flex; flex-direction: column; background: #fff; font-family: "Liberation Sans", Arial, sans-serif; font-size: 32px; }
.orange { height: 24px; background: linear-gradient(#e06d28 70%, #d8703a); flex: none; position: relative; z-index: 2; }
.apphead { height: 84px; flex: none; background: #fff; display: flex; align-items: center; position: relative; box-shadow: 0 2px 14px rgba(0,0,0,.5); z-index: 1; }
.palm { width: 80px; height: 78px; margin: -4px 0 0 52px; }
.apphead h1 { font-size: 32px; letter-spacing: -.05px; margin-left: 54px; width: 2284px; color: #666; line-height: 40px; margin-top: 5px; }
.btn { height: 70px; border-radius: 35px; color: #fff; font-weight: bold; display: flex; align-items: center; justify-content: center; text-shadow: 0 3px 3px rgba(0,0,0,.4); white-space: nowrap; }
.blue { background: linear-gradient(#5ea5dc, #3b8ad6); }
.red.btn { background: linear-gradient(#d0604f, #b84632); box-shadow: inset 0 2px 0 #d98a78; text-shadow: 0 -2px 2px rgba(0,0,0,.35); }
.tools { width: 124px; margin-top: -2px; border-bottom: 2px solid #2a619e; position: relative; }
.save { width: 246px; margin: -2px 0 0 20px; border-bottom: 2px solid #2a619e; }
.caret { position: absolute; left: 52px; top: 52px; border: 8px solid transparent; border-top: 9px solid #fff; border-bottom: 0; }
.stage { height: 1266px; flex: none; background: #f1f1f1; position: relative; padding: 13px 0 0 417px; }
.wall { position: absolute; left: 0; top: 0; width: 2880px; height: 1266px; }
.card { position: relative; width: 2046px; height: 1227px; background: #fff; border: 2px solid #e6e6e6; border-top-width: 1px; border-radius: 10px; padding: 46px 0 0 29px; }
.qhead { width: 1942px; height: 58px; border-bottom: 2px solid #e6e6e6; }
.qnum { display: block; width: 76px; height: 56px; background: #f1f1f1; font-weight: bold; line-height: 54px; padding-left: 20px; }
.q1 { margin: 77px 0 0 20px; line-height: 40px; }
.io { margin: 35px 0 0 786px; width: 328px; border-collapse: collapse; table-layout: fixed; line-height: 36px; }
.io td, .io th { border: 4px solid #000; text-align: center; vertical-align: top; padding: 5px 0 0 2px; height: 72px; }
.io th { height: 52px; }
.io th:first-child { width: 176px; }
.q2 { margin: 69px 0 0 20px; line-height: 40px; }
.choices { margin: 35px 0 0 50px; }
.choices label { display: flex; align-items: center; height: 74px; padding-bottom: 34px; line-height: 40px; }
.choices i { width: 26px; height: 26px; border: 2px solid #767676; border-radius: 50%; margin: -2px 9px 0 0; }
.choices b { width: 71px; }
.actions { display: flex; margin: 44px 0 0 770px; gap: 50px; }
.reset { width: 166px; }
.submit { width: 188px; }
.foot { height: 82px; flex: none; background: linear-gradient(#fff, #f0f0f0); box-shadow: 0 -2px 14px rgba(0,0,0,.5); position: relative; display: flex; justify-content: space-between; align-items: center; padding: 0 457px 8px 465px; color: #666; font-weight: bold; }

/* Dock */
.desk { height: 140px; padding: 2px 94px 0; }
.dock { width: 2692px; height: 138px; border-radius: 12px 12px 0 0; display: flex; padding: 15px 0 0 7.500px; background: linear-gradient(rgba(120,90,120,.25), rgba(120,80,120,0)), linear-gradient(90deg, #82494f, #8d4948 6%, #9a4b47 14%, #974e50 22%, #8d5c88 28%, #a77fd0 35%, #8a5a80 39%, #8a5566 44%, #925c70 50%, #7f5a88 56%, #7d5688 60%, #6f5168 64%, #80587a 68%, #b87ab0 74%, #a06ea5 80%, #8f659f 88%, #876398 93%, #8b6f88 96%, #a88a88); }
.app { width: 114.120px; height: 123px; display: flex; flex-direction: column; align-items: center; flex: none; }
.app svg { width: 100px; height: 100px; flex: none; filter: drop-shadow(0 2px 2px rgba(0,0,0,.3)); }
.petals rect { mix-blend-mode: multiply; }
.on::after { content: ""; width: 8px; height: 8px; border-radius: 50%; background: #16080f; margin-top: 11px; }
.sep { width: 2px; height: 102px; margin: 3px 0 0 26px; background: #6b4a78; }
.trash { margin-left: 23px; }
```
